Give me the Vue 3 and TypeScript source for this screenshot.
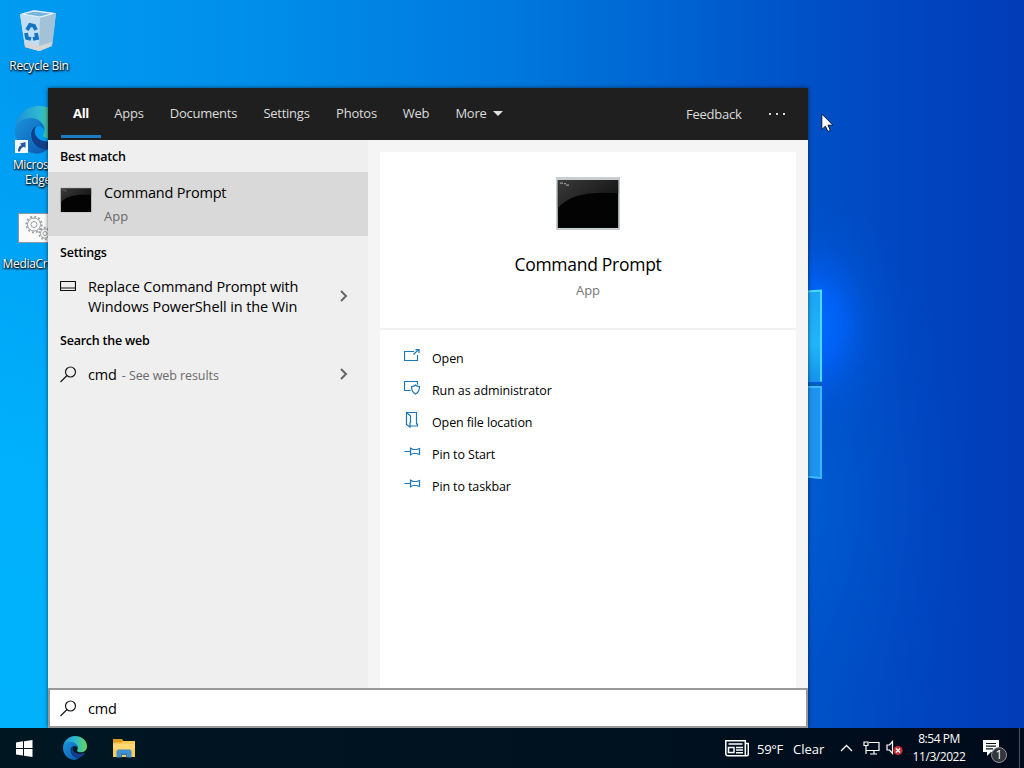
<script setup lang="ts">
interface Action {
  icon: 'open' | 'admin' | 'folder' | 'pin'
  label: string
}

const tabs: { label: string; cls: string }[] = [
  { label: 'All', cls: 'active' },
  { label: 'Apps', cls: '' },
  { label: 'Documents', cls: '' },
  { label: 'Settings', cls: '' },
  { label: 'Photos', cls: '' },
  { label: 'Web', cls: '' },
  { label: 'More', cls: 'more' },
]

const actions: Action[] = [
  { icon: 'open', label: 'Open' },
  { icon: 'admin', label: 'Run as administrator' },
  { icon: 'folder', label: 'Open file location' },
  { icon: 'pin', label: 'Pin to Start' },
  { icon: 'pin', label: 'Pin to taskbar' },
]
</script>

<template>
  <div class="desktop">
    <!-- wallpaper -->
    <svg class="wallpaper" width="1024" height="768" viewBox="0 0 1024 768">
      <defs>
        <linearGradient id="wpBase" x1="0" y1="0" x2="1" y2="0">
          <stop offset="0" stop-color="#009cf2" />
          <stop offset=".25" stop-color="#008eea" />
          <stop offset=".5" stop-color="#0078dd" />
          <stop offset=".68" stop-color="#0060cf" />
          <stop offset=".8" stop-color="#004fc6" />
          <stop offset=".92" stop-color="#0142be" />
          <stop offset="1" stop-color="#023cb6" />
        </linearGradient>
        <linearGradient id="wpLeft" x1="0" y1="0" x2="0" y2="1">
          <stop offset="0" stop-color="#00b4ff" stop-opacity="0" />
          <stop offset=".12" stop-color="#00b4ff" stop-opacity="0" />
          <stop offset=".6" stop-color="#00b4ff" stop-opacity=".85" />
          <stop offset="1" stop-color="#00b2fa" />
        </linearGradient>
        <radialGradient id="wpGlow" gradientUnits="userSpaceOnUse" cx="0" cy="0" r="1" gradientTransform="translate(812 325) scale(100 135)">
          <stop offset="0" stop-color="#006aff" />
          <stop offset=".28" stop-color="#0064fc" stop-opacity=".85" />
          <stop offset=".6" stop-color="#0058e0" stop-opacity=".35" />
          <stop offset="1" stop-color="#004cc6" stop-opacity="0" />
        </radialGradient>
        <radialGradient id="wpLow" gradientUnits="userSpaceOnUse" cx="0" cy="0" r="1" gradientTransform="translate(790 500) scale(190 300)">
          <stop offset="0" stop-color="#0068da" stop-opacity=".6" />
          <stop offset="1" stop-color="#004cc6" stop-opacity="0" />
        </radialGradient>
        <linearGradient id="paneTop" x1="0" y1="0" x2="0" y2="1">
          <stop offset="0" stop-color="#1ea4f4" />
          <stop offset=".6" stop-color="#22b4f8" />
          <stop offset="1" stop-color="#1592ea" />
        </linearGradient>
      </defs>
      <rect width="1024" height="768" fill="url(#wpBase)" />
      <rect y="0" width="100" height="768" fill="url(#wpLeft)" />
      <rect x="600" y="180" width="424" height="588" fill="url(#wpLow)" />
      <rect x="690" y="160" width="250" height="350" fill="url(#wpGlow)" />
      <path d="M800 292l22-2v92h-22z" fill="url(#paneTop)" />
      <path d="M800 292l21-1.500v91" fill="none" stroke="#46dcfb" stroke-width="2" />
      <path d="M800 386h22v93l-22-2z" fill="#1f93f0" />
      <path d="M800 387h21v91l-21-2" fill="none" stroke="#3cbdf8" stroke-width="1.800" />
      <path d="M800 384.500h22" stroke="#0560b4" stroke-width="2.500" />
    </svg>

    <!-- desktop shortcuts -->
    <div class="shortcut recycle">
      <svg width="40" height="44" viewBox="0 0 40 44">
        <path d="M1 5L15 1l22 3-4 33-12 5-15-4z" fill="#b9d8ec" />
        <path d="M1 5l20 4-1 33L6 38z" fill="#c3def0" />
        <path d="M21 9l16-5-4 33-13 5z" fill="#a3c2d8" />
        <path d="M3 5l12-3 19 2.500L21 8z" fill="#79b5da" stroke="#e5f5fc" stroke-width="1.200" />
        <path d="M6 34l14 3 13-4-1 4-12 5-14-4z" fill="#d8d5d6" />
        <g fill="none" stroke="#1274c4" stroke-width="3.800">
          <path d="M8 21l3-5 4 1 2 4" />
          <path d="M7 24l1 5 4 1" />
          <path d="M14 30l4-1-1-5" />
        </g>
      </svg>
      <span class="name n1">Recycle Bin</span>
    </div>
    <div class="shortcut edge">
      <div class="edge-art">
        <svg width="48" height="48" viewBox="0 0 24 24">
          <use href="#edgeLogo" />
        </svg>
        <svg class="arrow" width="13" height="13" viewBox="0 0 13 13">
          <rect width="13" height="13" fill="#f3f7fb" />
          <path d="M3 11.500C3 8 4 6 6.500 5L5 3.500 10.500 2v6L9 6.700C6.500 7.500 5.500 9 5 11.500z" fill="#225aa8" />
        </svg>
      </div>
      <span class="name n2">Microsoft<br />Edge</span>
    </div>
    <div class="shortcut media">
      <svg width="42" height="30" viewBox="0 0 42 30">
        <rect x=".5" y=".5" width="41" height="29" fill="#fafafa" stroke="#8c9aa2" />
        <g fill="none" stroke="#9a9ea1">
          <circle cx="16" cy="11.500" r="6.500" stroke-width="1" />
          <circle cx="16" cy="11.500" r="7.800" stroke-width="1.800" stroke-dasharray="2 2.080" />
          <circle cx="16" cy="11.500" r="3" />
          <circle cx="27" cy="20.500" r="4.500" />
          <circle cx="27" cy="20.500" r="5.800" stroke-width="1.800" stroke-dasharray="1.800 1.840" />
          <circle cx="27" cy="20.500" r="2" />
        </g>
      </svg>
      <span class="name n3">MediaCreati...</span>
    </div>

    <!-- search flyout -->
    <section class="flyout">
      <header class="head">
        <nav class="tabs">
          <div v-for="tab in tabs" :key="tab.label" class="tab" :class="tab.cls">
            <span>{{ tab.label }}</span>
            <svg v-if="tab.cls === 'more'" width="10" height="5" viewBox="0 0 10 5"><path d="M0 0h10L5 5z" fill="#e0e0e0" /></svg>
          </div>
        </nav>
        <span class="feedback">Feedback</span>
        <svg class="dots" width="16" height="2" viewBox="0 0 16 2" fill="#d8d8d8">
          <rect x="0" width="2" height="2" /><rect x="7" width="2" height="2" /><rect x="14" width="2" height="2" />
        </svg>
      </header>

      <div class="body">
        <div class="results">
          <h3>Best match</h3>
          <div class="best">
            <svg class="cmd-small" width="32" height="26" viewBox="0 0 64 52" preserveAspectRatio="none"><use href="#cmdArt" /></svg>
            <div class="best-text">
              <span class="best-title">Command Prompt</span>
              <span class="best-sub">App</span>
            </div>
          </div>
          <h3>Settings</h3>
          <div class="row tall">
            <svg class="row-icon" width="16" height="10" viewBox="0 0 16 10">
              <path d="M.5.500h15v9H.5z M.5 7h15" fill="none" stroke="#111" stroke-width="1.200" />
            </svg>
            <div class="row-text two"><span>Replace Command Prompt with</span><span class="l2">Windows PowerShell in the Win</span></div>
            <svg class="chev" width="8" height="12" viewBox="0 0 8 12"><path d="M1 1l5 5-5 5" fill="none" stroke="#666" stroke-width="2" /></svg>
          </div>
          <h3>Search the web</h3>
          <div class="row web">
            <svg class="lens" width="17" height="17" viewBox="0 0 17 17"><g fill="none" stroke="#1a1a1a" stroke-width="1.200"><circle cx="10.500" cy="6" r="5" /><path d="M7 9.500L.5 16" /></g></svg>
            <div class="row-text"><span>cmd</span><span class="hint">- See web results</span></div>
            <svg class="chev" width="8" height="12" viewBox="0 0 8 12"><path d="M1 1l5 5-5 5" fill="none" stroke="#666" stroke-width="2" /></svg>
          </div>
        </div>

        <div class="detail">
          <div class="hero">
            <svg width="64" height="53" viewBox="0 0 64 52" preserveAspectRatio="none"><use href="#cmdArt" /></svg>
            <span class="hero-title">Command Prompt</span>
            <span class="hero-sub">App</span>
          </div>
          <ul class="actions">
            <li v-for="action in actions" :key="action.label">
              <svg width="17" height="18" viewBox="0 0 17 18" fill="none" stroke="#1a78b8" stroke-width="1.200">
                <path v-if="action.icon === 'open'" d="M10 4.500H.5v9h13V8 M9.500 7.500l5-5 M11.500 2.500h3.500V6" />
                <template v-else-if="action.icon === 'admin'">
                  <path d="M6.500 11.500h-6v-9h13v3" />
                  <path d="M7.500 7.500c2 0 3-.5 4-1.500 1 1 2 1.500 4 1.500 0 4-1 6-4 7.500-3-1.500-4-3.500-4-7.500z" />
                </template>
                <path v-else-if="action.icon === 'folder'" d="M2.500 1.500h10v11.500h1v2H6.500 M2.500 1.500v12l3.500 2.500V12l.5-.5V5z" />
                <path v-else d="M.5 8.500h6 M6.500 4.500v8 M6.500 5c1.500 1.500 2 1.500 3.500 1.500h2.500l3-1v6l-3-1H10c-1.500 0-2 0-3.500 1.500" />
              </svg>
              <span>{{ action.label }}</span>
            </li>
          </ul>
        </div>
      </div>

      <div class="searchbox">
        <svg class="lens" width="17" height="17" viewBox="0 0 17 17"><g fill="none" stroke="#1a1a1a" stroke-width="1.200"><circle cx="10.500" cy="6" r="5" /><path d="M7 9.500L.5 16" /></g></svg>
        <span>cmd</span>
      </div>
    </section>

    <!-- taskbar -->
    <footer class="taskbar">
      <svg class="start" width="17" height="17" viewBox="0 0 17 17" fill="#fff">
        <path d="M0 2.400L7 1.300V8H0z M8 1.200L16.500 0v8H8z M0 9h7v6.600L0 14.600z M8 9h8.500v8L8 15.800z" />
      </svg>
      <svg class="edge-mini" width="24" height="24" viewBox="0 0 24 24"><use href="#edgeLogo" /></svg>
      <svg class="explorer" width="22" height="19" viewBox="0 0 22 19">
        <path d="M0 1h9l1.500 1H22v16H0z" fill="#fbcb58" />
        <path d="M0 0h9l1.500 2L9 3.500H0z" fill="#dd9b23" />
        <path d="M0 5h22v5H0z" fill="#ffd773" />
        <path d="M3.500 18.500V12l1.500-1.500h12l1.500 1.500v6.500h-4V15h-7v3.500z" fill="#3f8fd0" />
        <path d="M7.500 14.500h7v4h-1.500V16H9v2.500H7.500z" fill="#2b75b8" />
      </svg>

      <div class="tray">
        <svg class="news" width="24" height="17" viewBox="0 0 24 17" fill="none" stroke="#fff" stroke-width="1.500">
          <path d="M.8.800h19.500v15H3C1.500 15.800.8 15 .8 13.500z M20.300 3.500h3v10.500c0 1-.6 1.800-1.600 1.800h-2 M3.500 4h14 M3.500 7.500h5.500v5H3.500z M11 7.500h7 M11 10h7 M11 12.700h7" />
        </svg>
        <span class="temp">59°F</span>
        <span class="sky">Clear</span>
        <svg class="up" width="13" height="8" viewBox="0 0 13 8"><path d="M1 7l5.500-5.500L12 7" fill="none" stroke="#fff" stroke-width="1.300" /></svg>
        <svg class="net" width="17" height="14" viewBox="0 0 17 14" fill="none" stroke="#fff" stroke-width="1.200">
          <path d="M6 1.500h10v8H5.500 M11 9.500v3.500 M7 13h7 M1 1h4v3.500H1z M3 4.500V13 M3 9.500h3" />
        </svg>
        <svg class="vol" width="17" height="16" viewBox="0 0 17 16">
          <path d="M1 5h2.500L6.500 1.500v12L3.500 10H1z" fill="none" stroke="#fff" stroke-width="1.200" />
          <circle cx="12" cy="10.500" r="4.600" fill="#cc3036" />
          <path d="M10 8.500l4 4 M14 8.500l-4 4" stroke="#fff" stroke-width="1.300" />
        </svg>
        <div class="clock"><span>8:54 PM</span><span>11/3/2022</span></div>
        <div class="notes">
          <svg width="16" height="16" viewBox="0 0 16 16"><path d="M0 0h16v12H8l-4 4v-4H0z" fill="#fff" /><path d="M3 3.500h10 M3 6.200h10 M3 8.900h7" stroke="#0a1420" stroke-width="1.200" /></svg>
          <span class="badge">1</span>
        </div>
        <div class="peek"></div>
      </div>
    </footer>

    <svg class="cursor" width="13" height="20" viewBox="0 0 13 20">
      <path d="M.8 1v15.500l3.600-3.300L6.900 18.500l2.500-1.100L7 12.200h5z" fill="#fff" stroke="#06183c" stroke-width="1" />
    </svg>

    <!-- shared artwork -->
    <svg class="defs" width="0" height="0">
      <defs>
        <linearGradient id="egA" x1="0" y1="0" x2="1" y2="0">
          <stop offset="0" stop-color="#1c90d8" />
          <stop offset=".5" stop-color="#2fb8cf" />
          <stop offset="1" stop-color="#62d65a" />
        </linearGradient>
        <linearGradient id="egB" x1="0" y1="0" x2="1" y2="1">
          <stop offset="0" stop-color="#1a92de" />
          <stop offset="1" stop-color="#0c58ac" />
        </linearGradient>
        <linearGradient id="cmdSheen" x1="0" y1="0" x2="1" y2=".6">
          <stop offset="0" stop-color="#3a3a3a" />
          <stop offset="1" stop-color="#141414" />
        </linearGradient>
        <g id="edgeLogo">
          <path d="M0 12C0 5 5.500 0 12 0c7 0 12 4.800 12 10.300 0 4-3 6-6 6-2.500 0-4-.8-4-1.800 0-.6.800-1 .8-2.500C14.800 9.500 12 6.500 8 6.500 3.500 6.500 0 9.500 0 12z" fill="url(#egA)" />
          <path d="M0 12c0-3.500 3.500-6 8-6 3.500 0 6.800 2.500 6.800 6-1-1.500-2.500-2.300-4-2-2.500.5-3.500 3-3 5.500C8.600 19.500 12 22 16 21.800c-1.300 1.400-3 2-5 2.100C5 23.500 0 18.500 0 12z" fill="url(#egB)" />
          <path d="M8 14.500C8 19 12 22 16 21.900c2.500-.8 4.500-2.400 6-4.600.2-.4-.2-.7-.6-.5-5 2.500-11.500.2-11.500-4.100 0-1.200.5-2.200 1.300-2.800-2 .4-3.200 2.400-3.200 4.600z" fill="#103f8c" />
        </g>
        <g id="cmdArt">
          <rect width="64" height="52" fill="#c9cdd0" />
          <rect x="1.800" y="3" width="60.400" height="47" fill="#030303" />
          <path d="M1.800 3h60.400v13C35 14 12 17 1.800 31z" fill="url(#cmdSheen)" />
          <path d="M4 6h3 M8 6.500h2 M10 8h3" stroke="#999" stroke-width="1.100" />
        </g>
      </defs>
    </svg>
  </div>
</template>

<style>
html, body { margin: 0; overflow: hidden; }
</style>

<style scoped>
.desktop {
  position: relative;
  width: 1024px;
  height: 768px;
  overflow: hidden;
  font-family: "Open Sans", "Noto Sans", sans-serif;
  font-size: 13px;
  line-height: 16px;
  color: #000;
  white-space: nowrap;
}
svg { display: block; flex: none; }
.wallpaper { position: absolute; left: 0; top: 0; }
.defs { position: absolute; }

.shortcut { position: absolute; display: flex; flex-direction: column; align-items: center; width: 76px; left: 1px; }
.recycle { top: 9px; }
.edge { top: 106px; }
.media { top: 213px; }
.name {
  color: #fff;
  font-size: 12px;
  line-height: 15px;
  text-align: center;
  letter-spacing: -0.3px;
  text-shadow: 0 1px 2px #000, 1px 1px 2px #000;
}
.n1 { margin-top: 5px; }
.n2 { margin-top: 3px; margin-left: -2px; }
.n3 { margin-top: 13px; }
.edge-art { position: relative; }
.arrow { position: absolute; left: 0; bottom: 1px; }

.flyout {
  position: absolute;
  left: 48px;
  top: 88px;
  width: 760px;
  height: 640px;
  display: flex;
  flex-direction: column;
  background: #f5f5f5;
  box-shadow: 0 0 4px rgba(0, 0, 0, 0.6);
}
.head { display: flex; align-items: center; height: 52px; background: #1f1f1f; color: #dcdcdc; }
.tabs { display: grid; grid-template-columns: 40px 56px 93px 73px 67px 52px 74px; height: 52px; margin-left: 13px; letter-spacing: -0.25px; }
.tab { display: flex; align-items: center; justify-content: center; height: 50px; padding-top: 3px; border-bottom: 3px solid transparent; box-sizing: border-box; }
.tab.active { color: #fff; font-weight: 700; border-bottom-color: #1b7cc4; }
.more { gap: 6px; }
.feedback { margin-left: 170px; padding-bottom: 1px; width: 56px; letter-spacing: -0.25px; }
.dots { margin-left: 27px; }

.body { display: flex; flex: 1; }
.results { width: 320px; background: #efefef; }
.results h3 { margin: 0; padding: 1px 0 0 12px; height: 32px; box-sizing: border-box; line-height: 32px; font-size: 12.500px; font-weight: 600; letter-spacing: -0.22px; }
.best { display: flex; height: 64px; background: #d9d9d9; }
.cmd-small { margin: 15px 0 0 12px; }
.best-text { display: flex; flex-direction: column; margin-left: 12px; padding-top: 10px; }
.best-title { font-size: 14.500px; line-height: 22px; letter-spacing: -0.2px; }
.best-sub { margin-top: 3px; font-size: 13px; line-height: 18px; color: #696969; }
.row { display: flex; padding-left: 12px; }
.tall { height: 56px; }
.row-icon { margin-top: 13px; }
.row-text { margin-left: 12px; width: 239px; font-size: 14.500px; letter-spacing: -0.15px; }
.two { display: flex; flex-direction: column; line-height: 20px; padding-top: 9px; box-sizing: border-box; }
.l2 { letter-spacing: -0.11px; }
.tall .chev { margin: 22px 0 0 13px; }
.web { align-items: center; height: 36px; }
.web .row-text { margin-left: 11px; padding-top: 2px; }
.web .chev { margin-left: 13px; }
.hint { margin-left: 5px; font-size: 12.500px; letter-spacing: -0.08px; color: #6b6b6b; }

.detail { display: flex; flex-direction: column; width: 416px; margin: 12px 0 0 12px; background: #fff; }
.hero { display: flex; flex-direction: column; align-items: center; padding-top: 25px; box-sizing: border-box; border-bottom: 2px solid #f0f0f0; height: 178px; }
.hero-title { margin-top: 21px; font-size: 17.500px; line-height: 26px; letter-spacing: -0.28px; }
.hero-sub { margin-top: 4px; line-height: 18px; color: #767676; }
.actions { margin: 0; padding: 12px 0 0 24px; list-style: none; }
.actions li { display: flex; align-items: center; height: 32px; gap: 11px; font-size: 12.500px; letter-spacing: -0.12px; }
.actions svg { margin-top: -4px; }
.actions span { padding-top: 2px; }

.searchbox { display: flex; align-items: center; height: 40px; box-sizing: border-box; border: 2px solid #999; background: #fff; padding-left: 10px; font-size: 14.500px; letter-spacing: -0.15px; }
.searchbox span { margin-left: 11px; padding-top: 2px; }

.taskbar {
  position: absolute;
  left: 0;
  bottom: 0;
  width: 1024px;
  height: 40px;
  display: flex;
  align-items: center;
  background: linear-gradient(90deg, #001722, #00121f 55%, #000a1a);
  color: #fff;
}
.start { margin-left: 16px; }
.edge-mini { margin-left: 30px; }
.explorer { margin-left: 26px; }
.tray { display: flex; align-items: center; height: 40px; margin-left: auto; }
.temp { margin-left: 8px; width: 28px; padding-top: 1px; letter-spacing: -0.3px; }
.sky { margin-left: 8px; width: 33px; padding-top: 1px; }
.up { margin-left: 14px; }
.net { margin-left: 10px; }
.vol { margin-left: 6px; }
.clock { display: flex; flex-direction: column; align-items: center; width: 60px; margin-left: 6px; font-size: 12px; line-height: 18px; letter-spacing: -0.45px; }
.notes { position: relative; margin-left: 14px; }
.badge {
  position: absolute;
  left: 8px;
  top: 7px;
  width: 14px;
  height: 14px;
  border: 1px solid #8f949a;
  border-radius: 50%;
  background: #30363c;
  font-size: 12px;
  line-height: 14px;
  text-align: center;
}
.peek { width: 4px; height: 40px; margin-left: 20px; border-left: 1px solid #4b5562; }
.cursor { position: absolute; left: 821px; top: 113px; }
</style>
